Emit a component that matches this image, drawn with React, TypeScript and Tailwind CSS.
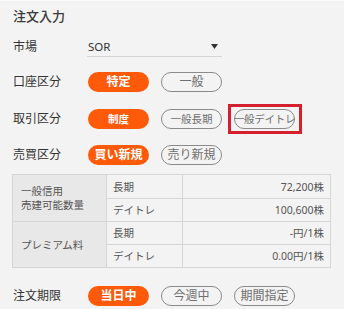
import React from "react";

const font = { fontFamily: '"Noto Sans", "Noto Sans CJK JP", sans-serif' };

function On({ children, size = "text-[12px]" }: { children: React.ReactNode; size?: string }) {
  return (
    <div className={`w-[61px] h-[20px] rounded-full bg-[#ff5a0a] text-white font-bold flex items-center justify-center leading-none ${size}`}>
      {children}
    </div>
  );
}

function Off({ children, size = "text-[12px]" }: { children: React.ReactNode; size?: string }) {
  return (
    <div className={`w-[61px] h-[20px] rounded-full border border-[#8a8a8a] text-[#6e6e6e] flex items-center justify-center leading-none whitespace-nowrap ${size}`}>
      {children}
    </div>
  );
}

function Row({ label, h, children }: { label: string; h: string; children: React.ReactNode }) {
  return (
    <div className={`flex items-center ${h}`}>
      <div className="w-[88px] shrink-0 pl-[13px] text-[12px] text-[#333] leading-none">{label}</div>
      <div className="flex items-center gap-[12px]">{children}</div>
    </div>
  );
}

export default function App() {
  return (
    <div className="w-[344px] h-[309px] overflow-hidden bg-[#f4f3f3] border-t border-[#fafafa]" style={font}>
      <div className="h-[31px] flex items-center pl-[13px] text-[13px] text-[#3a3a3a] font-medium leading-none">注文入力</div>
      <Row label="市場" h="h-[30px]">
        <div className="ml-[-1px] w-[135px] h-[19px] border-b border-[#d5d5d5] flex items-center justify-between pl-[1px] pr-[4px]">
          <span className="text-[11.5px] text-[#333] leading-none">SOR</span>
          <svg width="7" height="5" viewBox="0 0 7 5"><path d="M0 0h7L3.5 5z" fill="#333" /></svg>
        </div>
      </Row>
      <Row label="口座区分" h="h-[40px]">
        <On>特定</On>
        <Off>一般</Off>
      </Row>
      <Row label="取引区分" h="h-[34px]">
        <On size="text-[10.5px]">制度</On>
        <Off size="text-[10.5px]">一般長期</Off>
        <div className="relative">
          <Off size="text-[10.5px] tracking-[-0.3px]">一般デイトレ</Off>
          <div className="absolute left-[-6px] right-[-7px] top-[-5px] bottom-[-5px] border-[3px] border-[#d3202c] pointer-events-none" />
        </div>
      </Row>
      <Row label="売買区分" h="h-[38px]">
        <On>買い新規</On>
        <Off>売り新規</Off>
      </Row>
      <table className="ml-[12px] w-[319px] border-collapse text-[10.5px] text-[#555] leading-[12px]">
        <tbody>
          <tr className="h-[24px]">
            <td rowSpan={2} className="w-[94px] bg-[#e9e8e8] border border-[#d6d6d6] pl-[8px] align-middle leading-[14px]">
              <div>一般信用</div>
              <div>売建可能数量</div>
            </td>
            <td className="w-[76px] border border-[#d6d6d6] pl-[6px]">長期</td>
            <td className="border border-[#d6d6d6] pr-[6px] text-right">72,200株</td>
          </tr>
          <tr className="h-[23px]">
            <td className="border border-[#d6d6d6] pl-[6px]">デイトレ</td>
            <td className="border border-[#d6d6d6] pr-[6px] text-right">100,600株</td>
          </tr>
          <tr className="h-[23px]">
            <td rowSpan={2} className="bg-[#e9e8e8] border border-[#d6d6d6] pl-[8px]">プレミアム料</td>
            <td className="border border-[#d6d6d6] pl-[6px]">長期</td>
            <td className="border border-[#d6d6d6] pr-[6px] text-right">-円/1株</td>
          </tr>
          <tr className="h-[23px]">
            <td className="border border-[#d6d6d6] pl-[6px]">デイトレ</td>
            <td className="border border-[#d6d6d6] pr-[6px] text-right">0.00円/1株</td>
          </tr>
        </tbody>
      </table>
      <div className="mt-[13px]">
        <Row label="注文期限" h="h-[30px]">
          <On>当日中</On>
          <Off>今週中</Off>
          <Off>期間指定</Off>
        </Row>
      </div>
    </div>
  );
}
